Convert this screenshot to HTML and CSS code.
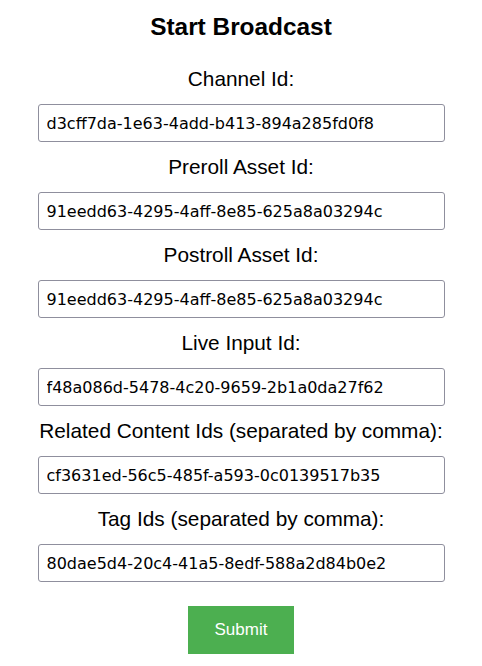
FILE: index.html
```html
<!DOCTYPE html>
<html>
<head>
<meta charset="utf-8">
<link rel="stylesheet" href="styles.css">
</head>
<body>
<form class="form">
  <h1 class="title">Start Broadcast</h1>
  <div class="field">
    <label class="label">Channel Id:</label>
    <input class="input" type="text" value="d3cff7da-1e63-4add-b413-894a285fd0f8">
  </div>
  <div class="field">
    <label class="label">Preroll Asset Id:</label>
    <input class="input" type="text" value="91eedd63-4295-4aff-8e85-625a8a03294c">
  </div>
  <div class="field">
    <label class="label">Postroll Asset Id:</label>
    <input class="input" type="text" value="91eedd63-4295-4aff-8e85-625a8a03294c">
  </div>
  <div class="field">
    <label class="label">Live Input Id:</label>
    <input class="input" type="text" value="f48a086d-5478-4c20-9659-2b1a0da27f62">
  </div>
  <div class="field">
    <label class="label">Related Content Ids (separated by comma):</label>
    <input class="input" type="text" value="cf3631ed-56c5-485f-a593-0c0139517b35">
  </div>
  <div class="field">
    <label class="label">Tag Ids (separated by comma):</label>
    <input class="input" type="text" value="80dae5d4-20c4-41a5-8edf-588a2d84b0e2">
  </div>
  <button class="submit" type="button">Submit</button>
</form>
</body>
</html>
```
FILE: styles.css
```css
html, body {
  margin: 0;
  padding: 0;
  background: #ffffff;
}
body {
  font-family: "Liberation Sans", Arial, sans-serif;
  color: #000;
}
.form {
  width: 407px;
  margin: 0 auto;
  padding-top: 14px;
  display: flex;
  flex-direction: column;
  align-items: center;
}
.title {
  margin: 0 0 28px;
  font-size: 24.4px;
  line-height: 26px;
  font-weight: bold;
}
.field {
  width: 100%;
  display: flex;
  flex-direction: column;
  align-items: center;
  gap: 14px;
  margin-bottom: 14px;
}
.label {
  font-size: 20.8px;
  line-height: 22px;
  white-space: nowrap;
}
.input {
  box-sizing: border-box;
  width: 100%;
  height: 38px;
  margin: 0;
  padding: 0 8px;
  border: 1px solid #8f8f9d;
  border-radius: 3px;
  font-family: "DejaVu Sans", Verdana, sans-serif;
  font-size: 16px;
  color: #000;
  background: #fff;
}
.submit {
  margin-top: 10px;
  width: 106px;
  height: 48px;
  border: none;
  background: #4caf50;
  color: #fff;
  font-family: "Liberation Sans", Arial, sans-serif;
  font-size: 17px;
  padding: 0;
}
```
